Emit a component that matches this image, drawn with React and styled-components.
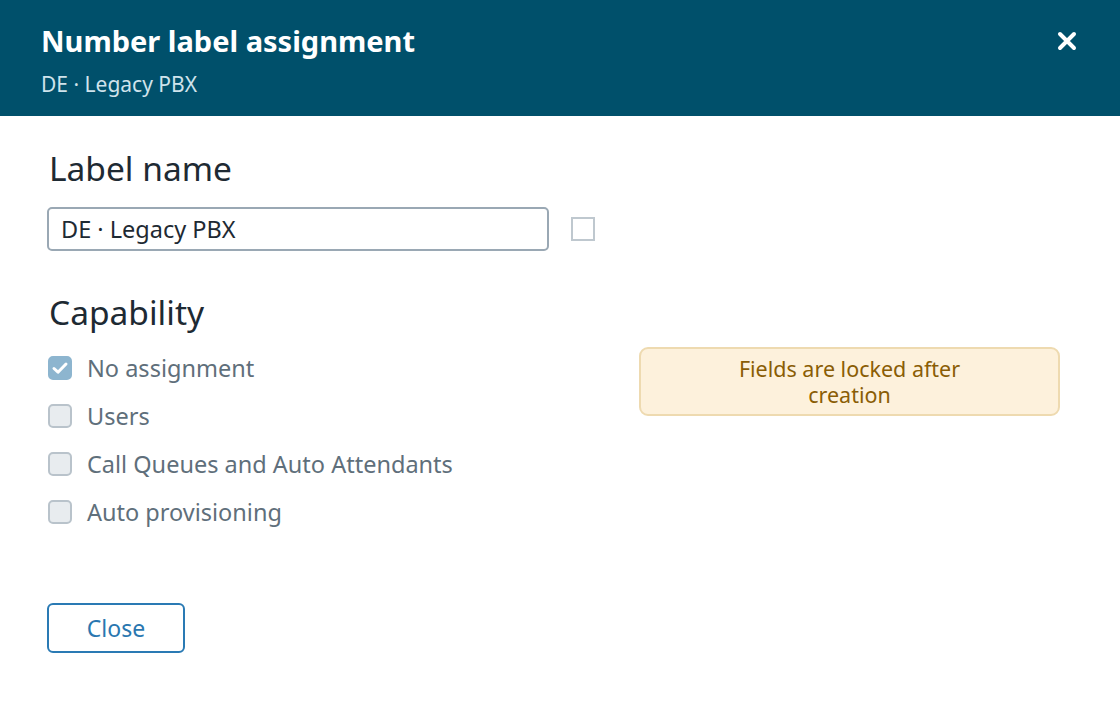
import React from 'react';
import styled, { createGlobalStyle } from 'styled-components';

const GlobalStyle = createGlobalStyle`
  html, body {
    margin: 0;
    padding: 0;
    background: #ffffff;
  }
  body {
    font-family: "Noto Sans", "Open Sans", sans-serif;
  }
`;

const Dialog = styled.div`
  width: 1120px;
  height: 704px;
  display: flex;
  flex-direction: column;
  background: #fff;
`;

const Header = styled.div`
  height: 116px;
  box-sizing: border-box;
  background: #00506b;
  padding: 22px 42px 0 41px;
  display: flex;
  justify-content: space-between;
  align-items: flex-start;
`;

const Titles = styled.div`
  display: flex;
  flex-direction: column;
`;

const Title = styled.h2`
  margin: 0;
  font-size: 29px;
  font-weight: 700;
  color: #ffffff;
  line-height: 38px;
`;

const Subtitle = styled.div`
  margin-top: 10px;
  font-size: 21px;
  color: #cfe3ec;
  line-height: 28px;
`;

const CloseIcon = styled.button`
  margin-top: 8px;
  width: 22px;
  height: 22px;
  padding: 0;
  border: none;
  background: transparent;
  cursor: pointer;
  display: flex;
  align-items: center;
  justify-content: center;
`;

const Body = styled.div`
  padding: 30px 48px 0 48px;
  display: flex;
  flex-direction: column;
`;

const SectionTitle = styled.h3`
  margin: 0 0 0 1px;
  font-size: 33.5px;
  font-weight: 400;
  color: #1e2a33;
  line-height: 44px;
`;

const NameRow = styled.div`
  display: flex;
  align-items: center;
  gap: 22px;
  margin: 17px 0 39px;
`;

const NameInput = styled.input`
  width: 502px;
  height: 44px;
  box-sizing: border-box;
  border: 2px solid #9aa8b4;
  border-radius: 5px;
  padding: 0 12px;
  font-family: inherit;
  font-size: 23.5px;
  color: #1e2a33;
  margin-left: -1px;
  outline: none;
`;

const PlainBox = styled.span`
  width: 24px;
  height: 24px;
  box-sizing: border-box;
  border: 2px solid #bfc8cf;
  background: #fff;
`;

const CapabilityArea = styled.div`
  display: flex;
  justify-content: space-between;
  align-items: flex-start;
`;

const OptionList = styled.div`
  display: flex;
  flex-direction: column;
  gap: 24px;
  padding-top: 22px;
`;

const Option = styled.label`
  display: flex;
  align-items: center;
  gap: 15px;
  height: 24px;
  font-size: 23.5px;
  color: #5f6f7b;
`;

const Check = styled.span`
  width: 24px;
  height: 24px;
  box-sizing: border-box;
  border-radius: 5px;
  border: 2px solid ${p => (p.$checked ? '#8db5cf' : '#b9c3cb')};
  background: ${p => (p.$checked ? '#8db5cf' : '#e8ecef')};
  display: flex;
  align-items: center;
  justify-content: center;
  flex-shrink: 0;
`;

const Notice = styled.div`
  width: 421px;
  height: 69px;
  box-sizing: border-box;
  margin-top: 13px;
  margin-right: 12px;
  background: #fdf1dc;
  border: 2px solid #eedab0;
  border-radius: 9px;
  display: flex;
  align-items: center;
  justify-content: center;
`;

const NoticeText = styled.div`
  max-width: 270px;
  text-align: center;
  font-size: 21.5px;
  line-height: 26px;
  color: #8a5d05;
`;

const CloseButton = styled.button`
  margin-top: 79px;
  margin-left: -1px;
  width: 138px;
  height: 50px;
  box-sizing: border-box;
  border: 2px solid #2a7ab4;
  border-radius: 6px;
  background: #fff;
  color: #2a77b0;
  font-family: inherit;
  font-size: 23px;
  cursor: pointer;
`;

const capabilities = [
  { label: 'No assignment', checked: true },
  { label: 'Users', checked: false },
  { label: 'Call Queues and Auto Attendants', checked: false },
  { label: 'Auto provisioning', checked: false },
];

export default function App() {
  return (
    <>
      <GlobalStyle />
      <Dialog>
        <Header>
          <Titles>
            <Title>Number label assignment</Title>
            <Subtitle>DE · Legacy PBX</Subtitle>
          </Titles>
          <CloseIcon aria-label="Close">
            <svg width="20" height="20" viewBox="0 0 20 20">
              <path d="M3 3 L17 17 M17 3 L3 17" stroke="#fff" strokeWidth="4" strokeLinecap="round" />
            </svg>
          </CloseIcon>
        </Header>
        <Body>
          <SectionTitle>Label name</SectionTitle>
          <NameRow>
            <NameInput defaultValue="DE · Legacy PBX" />
            <PlainBox />
          </NameRow>
          <SectionTitle>Capability</SectionTitle>
          <CapabilityArea>
            <OptionList>
              {capabilities.map(c => (
                <Option key={c.label}>
                  <Check $checked={c.checked}>
                    {c.checked && (
                      <svg width="18" height="18" viewBox="0 0 18 18">
                        <path d="M3 9.5 L7 13.2 L15 5" fill="none" stroke="#fff" strokeWidth="3" strokeLinecap="round" strokeLinejoin="round" />
                      </svg>
                    )}
                  </Check>
                  {c.label}
                </Option>
              ))}
            </OptionList>
            <Notice>
              <NoticeText>Fields are locked after creation</NoticeText>
            </Notice>
          </CapabilityArea>
          <div>
            <CloseButton>Close</CloseButton>
          </div>
        </Body>
      </Dialog>
    </>
  );
}
